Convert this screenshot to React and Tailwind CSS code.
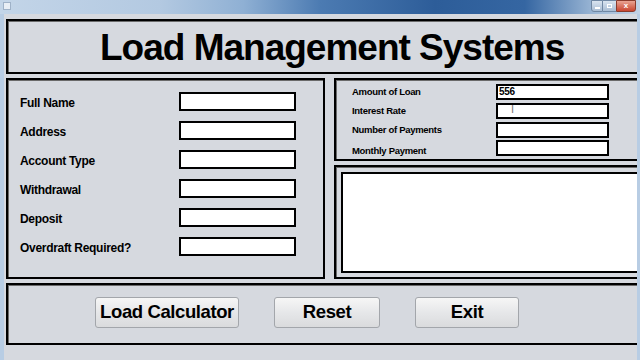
import React from "react";

const FONT = { fontFamily: '"Liberation Sans", Arial, sans-serif' };

const leftFields = [
  "Full Name",
  "Address",
  "Account Type",
  "Withdrawal",
  "Deposit",
  "Overdraft Required?",
];

const loanFields = [
  { label: "Amount of Loan", value: "556" },
  { label: "Interest Rate", value: "" },
  { label: "Number of Payments", value: "" },
  { label: "Monthly Payment", value: "" },
];

const TitleBar = () => (
  <div className="relative h-[14px] bg-[linear-gradient(90deg,#c3d5e8_0%,#b3c9e1_25%,#8fb0d4_38%,#4c7bb2_50%,#2d5d99_68%,#3566a2_82%,#9db8d6_93%,#c2d3e6_100%)]">
    <div className="absolute left-[3px] top-[2px] w-[8px] h-[8px] bg-[#e8eef5] border border-[#9fb2c8]" />
    <div className="absolute right-[4px] top-0 flex h-[12px]">
      <div className="w-[12px] h-full bg-[linear-gradient(#d9e4f0,#a9bdd4)] border border-[#6f87a3] rounded-bl-[3px] flex items-end justify-center pb-[2px]">
        <div className="w-[5px] h-[2px] bg-white" />
      </div>
      <div className="w-[13px] h-full bg-[linear-gradient(#d9e4f0,#a9bdd4)] border-y border-[#6f87a3] flex items-center justify-center">
        <div className="w-[5px] h-[4px] border border-white" />
      </div>
      <div className="w-[20px] h-full bg-[linear-gradient(#e9a493,#c9452f)] border border-[#8a3b2c] rounded-br-[3px] flex items-center justify-center text-white text-[8px] font-bold leading-none">
        x
      </div>
    </div>
  </div>
);

const Input = ({ className, value }) => (
  <div className={`bg-white border-2 border-black flex items-center text-[10px] font-bold text-black leading-none pl-[1px] tracking-[-0.3px] ${className}`}>
    {value}
  </div>
);

export default function App() {
  return (
    <div
      className="w-[640px] h-[360px] overflow-hidden bg-[#d6d9df] flex flex-col whitespace-nowrap"
      style={FONT}
    >
      <TitleBar />
      <div className="flex-1 flex border-l-[4px] border-r-[3px] border-[#b8cde4] pl-[2px] pt-[5px]">
        <div className="flex-1 flex flex-col">
          {/* title */}
          <div className="h-[55px] border-2 border-r-0 border-black shadow-[inset_1px_1px_0_#6b6b6b] flex items-center pl-[92px] pt-[2px]">
            <h1 className="text-[37px] font-bold text-black leading-none tracking-[-1px]">Load Management Systems</h1>
          </div>

          {/* middle */}
          <div className="mt-[4px] h-[201px] flex gap-[9px]">
            <div className="w-[319px] border-2 border-black shadow-[inset_1px_1px_0_#6b6b6b] pt-[12px] pl-[12px] flex flex-col">
              {leftFields.map((f) => (
                <div key={f} className="h-[29px] flex items-start">
                  <div className="w-[159px] pt-[5px] text-[12px] font-bold text-black leading-none tracking-[-0.3px]">{f}</div>
                  <Input className="w-[117px] h-[19px]" />
                </div>
              ))}
            </div>

            <div className="flex-1 flex flex-col gap-[4px]">
              <div className="h-[83px] border-2 border-r-0 border-black shadow-[inset_1px_1px_0_#6b6b6b] pt-[4px] pl-[16px] flex flex-col">
                {loanFields.map((f, i) => (
                  <div key={f.label} className="h-[19px] flex items-start">
                    <div
                      className={`w-[144px] text-[9.5px] font-bold text-black leading-none tracking-[-0.3px] ${
                        i === 3 ? "pt-[6px]" : "pt-[3px]"
                      }`}
                    >
                      {f.label}
                    </div>
                    <div className="relative">
                      <Input className="w-[113px] h-[16px]" value={f.value} />
                      {i === 1 && (
                        <span className="absolute left-[15px] top-[1px] text-[11px] text-[#777] leading-none">I</span>
                      )}
                    </div>
                  </div>
                ))}
              </div>
              <div className="flex-1 border-2 border-r-0 border-black shadow-[inset_1px_1px_0_#6b6b6b] pt-[5px] pl-[5px] pb-[4px] flex">
                <div className="flex-1 bg-white border-2 border-r-0 border-black" />
              </div>
            </div>
          </div>

          {/* buttons */}
          <div className="mt-[4px] h-[62px] border-2 border-r-0 border-black shadow-[inset_1px_1px_0_#6b6b6b] flex items-center pl-[87px] gap-[35px]">
            {[
              ["Load Calculator", "w-[144px]"],
              ["Reset", "w-[106px]"],
              ["Exit", "w-[104px]"],
            ].map(([t, w]) => (
              <button
                key={t}
                className={`${w} h-[31px] -mt-[3px] rounded-[3px] border border-[#a3a6ab] bg-[linear-gradient(#f6f6f6,#e6e7e9_50%,#dadbdd)] flex items-center justify-center text-[18.5px] font-bold text-black leading-none tracking-[-0.4px]`}
              >
                {t}
              </button>
            ))}
          </div>
        </div>
      </div>
    </div>
  );
}
